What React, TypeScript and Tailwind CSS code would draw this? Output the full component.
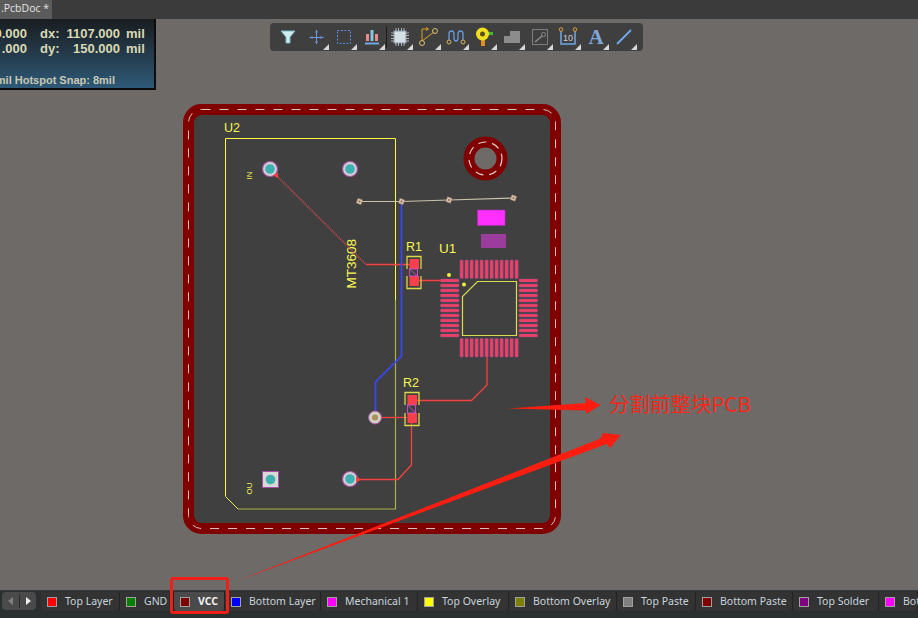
import React from "react";

const tabs = [
  { n: "Top Layer", c: "#ff0000", w: "w-[79px]" },
  { n: "GND", c: "#008000", w: "w-[54px]" },
  { n: "VCC", c: "#800000", w: "w-[51px]", active: true },
  { n: "Bottom Layer", c: "#0000ff", w: "w-[96px]" },
  { n: "Mechanical 1", c: "#ff00ff", w: "w-[97px]" },
  { n: "Top Overlay", c: "#ffff00", w: "w-[91px]" },
  { n: "Bottom Overlay", c: "#808000", w: "w-[108px]" },
  { n: "Top Paste", c: "#808080", w: "w-[79px]" },
  { n: "Bottom Paste", c: "#800000", w: "w-[97px]" },
  { n: "Top Solder", c: "#800080", w: "w-[86px]" },
  { n: "Bot", c: "#ff00ff", w: "w-[39px]" },
];

function Slot({ children, sep }: { children: React.ReactNode; sep?: boolean }) {
  return (
    <div className="relative w-[28px] h-[28px] flex items-center justify-center shrink-0">
      <svg width="22" height="22" viewBox="0 0 22 22" fill="none">{children}</svg>
      {!sep && (
        <svg className="absolute right-[1px] bottom-[1px]" width="6" height="6" viewBox="0 0 6 6">
          <path d="M6 0V6H0Z" fill="#d8d8d8" />
        </svg>
      )}
    </div>
  );
}

function Toolbar() {
  return (
    <div className="absolute left-[270px] top-[4px] w-[373px] h-[28px] bg-[#3f3f3f] rounded-sm flex items-center pl-[4px]">
      <Slot sep>
        <path d="M4 5H18L13 11V17H9V11Z" fill="#cfeef2" stroke="#7fb7c4" strokeWidth="1" />
      </Slot>
      <Slot>
        <path d="M11.500 4V18M4.500 11.500H18.500" stroke="#6f9be8" strokeWidth="1" />
        <path d="M10 6H13M10 16H13M7 10V13M16 10V13" stroke="#5f88d0" strokeWidth="1" />
      </Slot>
      <Slot>
        <rect x="4.500" y="4.500" width="13" height="13" stroke="#5f8fe8" strokeWidth="1" strokeDasharray="2 1.500" />
      </Slot>
      <Slot>
        <path d="M4 17.500H18" stroke="#6fa8e8" strokeWidth="2" />
        <rect x="5" y="8" width="3" height="7" fill="#e88a8a" />
        <rect x="9.500" y="4" width="3" height="11" fill="#7fc8e0" />
        <rect x="14" y="8" width="3" height="7" fill="#e88a8a" />
      </Slot>
      <div className="w-[1px] h-[22px] bg-[#1c1c1c] -mr-[1px]" />
      <Slot>
        <rect x="5" y="5" width="12" height="12" fill="#d5dfe6" stroke="#8a9aa6" />
        <path d="M7 2V5M9.500 2V5M12.500 2V5M15 2V5M7 17V20M9.500 17V20M12.500 17V20M15 17V20M2 7H5M2 9.500H5M2 12.500H5M2 15H5M17 7H20M17 9.500H20M17 12.500H20M17 15H20" stroke="#a8b4bc" strokeWidth="1" />
      </Slot>
      <Slot>
        <path d="M5 15L17 6M5 15V3H11M9 1.500L11.500 3L9 4.500" stroke="#e0a020" strokeWidth="1" />
        <circle cx="5" cy="17" r="2.500" stroke="#d8c070" strokeWidth="1" />
        <circle cx="18" cy="5" r="2.500" stroke="#d8c070" strokeWidth="1" />
      </Slot>
      <Slot>
        <path d="M4 14V8C4 4 9 4 9 8V12C9 16 13 16 13 12V8C13 4 18 4 18 8V14" stroke="#6a9ae0" strokeWidth="1.300" />
        <circle cx="4" cy="16" r="2" stroke="#d8b060" strokeWidth="1" />
        <circle cx="18" cy="16" r="2" stroke="#d8b060" strokeWidth="1" />
      </Slot>
      <Slot>
        <rect x="13" y="6" width="7" height="3" fill="#40b840" />
        <rect x="8" y="13" width="4" height="7" fill="#e09020" />
        <circle cx="9.500" cy="8" r="6.500" fill="#f0e020" />
        <circle cx="9.500" cy="8" r="2.500" fill="#5a5020" />
      </Slot>
      <Slot>
        <path d="M3 17V10H9V5H19V17Z" fill="#8c8c8c" />
      </Slot>
      <Slot>
        <rect x="3.500" y="3.500" width="15" height="15" stroke="#7c7c7c" strokeWidth="1" />
        <path d="M6 16L13 10" stroke="#8c8c8c" strokeWidth="1.500" />
        <circle cx="14.500" cy="8.500" r="2" stroke="#8c8c8c" strokeWidth="1" />
      </Slot>
      <Slot>
        <path d="M4 5V18H18V5" stroke="#6fa8e8" strokeWidth="1.500" />
        <circle cx="4" cy="3.500" r="1.800" stroke="#e0a040" strokeWidth="1" />
        <circle cx="18" cy="3.500" r="1.800" stroke="#e0a040" strokeWidth="1" />
        <text x="11" y="15" textAnchor="middle" fontSize="9" fontFamily="Liberation Sans, sans-serif" fill="#d0d0d0">10</text>
      </Slot>
      <Slot>
        <text x="11" y="18" textAnchor="middle" fontSize="21" fontWeight="700" fontFamily="Liberation Serif, serif" fill="#7fa8d8">A</text>
      </Slot>
      <Slot>
        <path d="M4 18L18 4" stroke="#6fa8e8" strokeWidth="2" />
      </Slot>
    </div>
  );
}

function Hud() {
  const cell = "flex justify-end whitespace-nowrap";
  return (
    <div className="absolute left-0 top-0 w-[156px] h-[71px] bg-gradient-to-b from-[#191d21] to-[#2d5a78] border-r-2 border-b-2 border-[#0c0c0c] overflow-hidden font-['Liberation_Sans',sans-serif] font-bold text-[13px] leading-[15px] text-[#d9d9b4]">
      <div className="grid grid-cols-[27px_24px_57px_auto] gap-x-[6px] pt-[7px]">
        <div className={cell}>0.000</div>
        <div className="pl-[7px]">dx:</div>
        <div className={cell}>1107.000</div>
        <div>mil</div>
        <div className={cell}>.000</div>
        <div className="pl-[7px]">dy:</div>
        <div className={cell}>150.000</div>
        <div>mil</div>
      </div>
      <div className="absolute left-0 top-[55px] w-[115px] flex justify-end whitespace-nowrap text-[11px] leading-[13px] text-[#c9c9b4]">
        mil Hotspot Snap: 8mil
      </div>
    </div>
  );
}

function Pad({ x, y }: { x: number; y: number }) {
  return (
    <g>
      <circle cx={x} cy={y} r="7.500" fill="#d2d2d2" stroke="#a84fa8" strokeWidth="1.200" />
      <circle cx={x} cy={y} r="4.800" fill="#3fb0b0" />
    </g>
  );
}

function Via({ x, y }: { x: number; y: number }) {
  return (
    <g>
      <rect x={x - 2.5} y={y - 2.5} width="5" height="5" fill="#d8c4b0" stroke="#a07860" strokeWidth="0.500" transform={`rotate(20 ${x} ${y})`} />
      <circle cx={x} cy={y} r="1" fill="#8a6a50" />
    </g>
  );
}

function SmdPart({ x, y, h }: { x: number; y: number; h: number }) {
  const bx = x + 3;
  return (
    <g>
      <path d={`M${x + 0.5} ${y + 13}V${y + 0.5}H${x + 14.5}V${y + 13}M${x + 0.5} ${y + h - 13}V${y + h - 0.5}H${x + 14.5}V${y + h - 13}`} fill="none" stroke="#d8d848" strokeWidth="1.300" />
      <rect x={bx} y={y + 3} width="9.500" height="10" fill="#f8404c" />
      <rect x={bx} y={y + h - 13} width="9.500" height="10" fill="#f8404c" />
      <rect x={bx} y={y + 13} width="8" height={h - 26} fill="none" stroke="#e050e0" strokeWidth="0.800" />
      <path d={`M${bx} ${y + 13}L${bx + 8} ${y + h - 13}`} stroke="#e050e0" strokeWidth="0.800" />
    </g>
  );
}

function Pcb() {
  const idx = Array.from({ length: 12 }, (_, i) => i);
  const font = "Liberation Sans, sans-serif";
  return (
    <svg className="block w-[918px] h-[571px]" viewBox="0 19 918 571">
      <rect x="188.500" y="109.500" width="367" height="419" rx="13" fill="#404040" stroke="#800000" strokeWidth="11" />
      <rect x="188.500" y="109.500" width="367" height="419" rx="13" fill="none" stroke="#d8c0c0" strokeWidth="1" strokeDasharray="9 9" />

      <circle cx="485.500" cy="158.500" r="16.500" fill="#6e6a68" stroke="#800000" strokeWidth="11" />
      <circle cx="485.500" cy="158.500" r="16.500" fill="none" stroke="#e0d0d0" strokeWidth="1.200" strokeDasharray="8 6" />

      <path d="M225.500 496.500V138.500H395.500V300" fill="none" stroke="#ffff48" strokeWidth="1" />
      <path d="M225.500 496.500L238 509" fill="none" stroke="#e8e850" strokeWidth="1" />
      <path d="M238 509H395.500V300" fill="none" stroke="#b0b048" strokeWidth="1.200" />

      <text x="224" y="132" fontSize="12.500" fontFamily={font} fill="#f8f850">U2</text>
      <text x="406" y="251" fontSize="12.500" fontFamily={font} fill="#f8f850">R1</text>
      <text x="439" y="253" fontSize="13.500" fontFamily={font} fill="#f8f850">U1</text>
      <text x="403" y="387" fontSize="12.500" fontFamily={font} fill="#f8f850">R2</text>
      <text x="0" y="0" fontSize="13.500" fontFamily={font} fill="#f8f850" transform="translate(355.500 288.500) rotate(-90)">MT3608</text>
      <text x="0" y="0" fontSize="8" fontFamily={font} fill="#f8f850" transform="translate(251.500 179.500) rotate(-90)">IN</text>
      <text x="0" y="0" fontSize="8" fontFamily={font} fill="#f8f850" transform="translate(251.500 494.500) rotate(-90)">OU</text>

      <path d="M275 174L366 264.500" stroke="#d04848" strokeWidth="1.700" strokeDasharray="1 1" />
      <path d="M366 264.500H410" stroke="#f84040" strokeWidth="1.300" fill="none" />
      <path d="M418 280.500H458" stroke="#f84040" strokeWidth="1.300" fill="none" />
      <path d="M416 400.500H471.500L487 385V357" stroke="#f84040" strokeWidth="1.300" fill="none" />
      <path d="M375 417.500H407" stroke="#f84040" strokeWidth="1.300" fill="none" />
      <path d="M411.500 422V465L398 479.500H357" stroke="#f84040" strokeWidth="1.300" fill="none" />
      <path d="M401.500 201V356L375.500 382V411" stroke="#3a46f0" strokeWidth="1.800" fill="none" />
      <path d="M358.500 201.500L401.500 201.500L449 200L513.500 198" stroke="#c8c4a8" strokeWidth="1.200" fill="none" />
      <Via x={359.500} y={201.500} />
      <Via x={401.500} y={201.500} />
      <Via x={449} y={200} />
      <Via x={513.500} y={198} />

      <Pad x={270} y={169} />
      <Pad x={350} y={169} />
      <Pad x={350} y={479} />
      <path d="M273 175.500L278 172.500V178Z" fill="#f84040" />
      <path d="M356 476.500L361 479.500L356 482.500Z" fill="#f84040" />
      <rect x="262.500" y="471.500" width="16" height="16" fill="#d8d8d8" stroke="#a84fa8" strokeWidth="1" />
      <circle cx="270.500" cy="479.500" r="4.800" fill="#3fb0b0" />
      <circle cx="375" cy="417.500" r="6.500" fill="#d2d0c0" stroke="#a84fa8" strokeWidth="1" />
      <circle cx="375" cy="417.500" r="3" fill="#a8905a" />

      <rect x="477.500" y="210" width="27.500" height="15.500" fill="#ff30ff" stroke="#b030b0" strokeWidth="0.600" />
      <rect x="481" y="234" width="25" height="14" fill="#9c3c9c" />

      <SmdPart x={406.500} y={256} h={33} />
      <SmdPart x={404.500} y={392} h={34} />

      {idx.map((i) => (
        <g key={i}>
          <rect x={460 + 5 * i} y="260" width="3.200" height="18.500" rx="0.800" fill="#f04060" stroke="#984a98" strokeWidth="0.500" />
          <rect x={460 + 5 * i} y="338.500" width="3.200" height="18.500" rx="0.800" fill="#f04060" stroke="#984a98" strokeWidth="0.500" />
          <rect x="440.500" y={279 + 5 * i} width="18.500" height="3" rx="0.800" fill="#f04060" stroke="#984a98" strokeWidth="0.500" />
          <rect x="519" y={279 + 5 * i} width="18.500" height="3" rx="0.800" fill="#f04060" stroke="#984a98" strokeWidth="0.500" />
        </g>
      ))}
      <path d="M477.500 281.500H516.500V335.500H462.500V296.500Z" fill="none" stroke="#dcdc50" strokeWidth="1.200" />
      <circle cx="449" cy="275" r="2" fill="#f0f040" />
      <circle cx="464" cy="284.500" r="2" fill="#f0f040" />
    </svg>
  );
}

export default function App() {
  return (
    <div className="relative w-[918px] h-[618px] flex flex-col overflow-hidden bg-[#6e6a68] font-['Noto_Sans',sans-serif]">
      <div className="h-[19px] shrink-0 bg-[#3b3b3b] flex items-start">
        <div className="w-[52px] h-[19px] bg-[#5b5b5b] flex justify-start items-center pl-[1px] pb-[2px] whitespace-nowrap text-[10.5px] text-[#e4e4e4] font-['Open_Sans',sans-serif]">
          .PcbDoc *
        </div>
      </div>

      <div className="relative flex-1">
        <Pcb />
        <Hud />
        <Toolbar />
      </div>

      <div className="h-[28px] shrink-0 bg-[#2a302f] pt-[1px] flex items-start border-t border-[#3a3a3a]">
        <div className="ml-[2px] mr-[5px] w-[34px] h-[18px] bg-[#4a4a4a] rounded-sm flex items-center">
          <svg width="17" height="18" viewBox="0 0 17 18"><path d="M11 5V13L6 9Z" fill="#808080" /></svg>
          <div className="w-[1px] h-[14px] bg-[#2a2a2a]" />
          <svg width="16" height="18" viewBox="0 0 16 18"><path d="M6 5V13L11 9Z" fill="#f0f0f0" /></svg>
        </div>
        {tabs.map((t) => (
          <div
            key={t.n}
            className={`${t.w} shrink-0 h-[19px] flex items-center pl-[6px] gap-[8px] whitespace-nowrap rounded-b-[3px] border-r border-[#222] text-[10.5px] font-['Noto_Sans',sans-serif] ${t.active ? "bg-[#4a4a4a] text-[#f4f4f4] font-bold" : "bg-[#333333] text-[#c8d4dc]"}`}
          >
            <span className="w-[10px] h-[10px] shrink-0 border border-[#a0a0a0]" style={{ backgroundColor: t.c }} />
            {t.n}
          </div>
        ))}
      </div>

      <div className="absolute left-[170px] top-[577px] w-[59px] h-[37px] border-[3px] border-[#f02018] rounded-[3px]" />
      <svg className="absolute left-0 top-0 pointer-events-none" width="918" height="618" viewBox="0 0 918 618">
        <path d="M507 408.500L586 403L585 397L600.500 405L586 414L586 410.500Z" fill="#fb1e10" />
        <path d="M237 581L600.500 438.500L603 433L621 435L610 448L606.500 444Z" fill="#fb1e10" />
        <text x="609" y="412" fontSize="20.500" fontFamily="Noto Sans CJK SC, sans-serif" fill="#f82818">分割前整块PCB</text>
      </svg>
    </div>
  );
}
